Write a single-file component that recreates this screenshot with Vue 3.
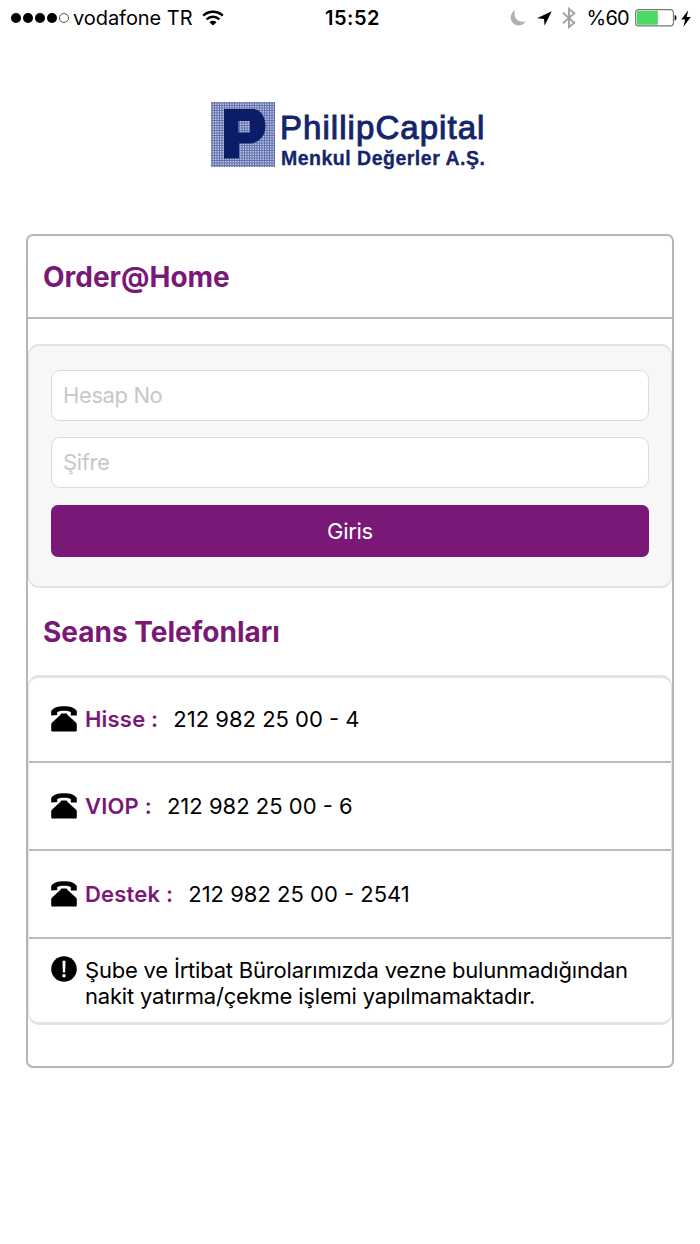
<template>
  <div class="page">
    <!-- Status bar -->
    <div class="status-bar">
      <div class="status-left">
        <span class="signal">
          <i v-for="n in 5" :key="n" class="dot" :class="{ empty: n === 5 }"></i>
        </span>
        <span class="carrier">vodafone TR</span>
        <svg class="wifi" width="22" height="16" viewBox="0 0 22 16" fill="none" stroke="#000" stroke-width="2.4">
          <path d="M1.2 5.6C6.8.4 15.2.4 20.8 5.6" />
          <path d="M4.6 9.3c3.7-3.4 9.1-3.4 12.8 0" />
          <path d="M11 15.6 7.5 12.2c2-1.9 5-1.9 7 0z" fill="#000" stroke="none" />
        </svg>
      </div>
      <div class="clock">15:52</div>
      <div class="status-right">
        <svg class="moon" width="16" height="16" viewBox="0 0 16 16">
          <path d="M5 .3A8 8 0 1 0 15.700 11.200C9 13.500 2.500 7.500 5 .3z" fill="#b0b0b0" />
        </svg>
        <svg class="arrow" width="15" height="15" viewBox="0 0 15 15">
          <path d="M14.7.3 0 7.2l7 .8.6 6.8z" fill="#000" />
        </svg>
        <svg class="bluetooth" width="14" height="22" viewBox="0 0 14 22" fill="none" stroke="#a3a3a3" stroke-width="1.9">
          <path d="M1 5.8 12.3 15.800 7 20.200V1.8L12.300 6.200 1 16.200" />
        </svg>
        <span class="percent">%60</span>
        <svg class="battery" width="42" height="18" viewBox="0 0 42 18">
          <rect x=".6" y=".6" width="37.8" height="16.3" rx="3" fill="#fff" stroke="#777" stroke-width="1.1" />
          <path d="M3.5 1.7H22.8V15.8H3.5A1.8 1.8 0 0 1 1.7 14V3.5A1.8 1.8 0 0 1 3.5 1.7z" fill="#4cd964" />
          <path d="M39.6 6c2.6.5 2.6 5.2 0 5.7z" fill="#000" />
        </svg>
        <svg class="bolt" width="10" height="17" viewBox="0 0 10 17">
          <path d="M7.2.3.3 9.6h3.9L2.4 16.7 9.8 6.9H5.7z" fill="#000" />
        </svg>
      </div>
    </div>

    <!-- Logo -->
    <div class="logo">
      <svg class="logo-mark" width="64" height="65" viewBox="0 0 64 65">
        <rect width="64" height="65" fill="#bcc4e0" />
        <path :d="gridPath" stroke="#5b6bac" stroke-width=".9" fill="none" />
        <path
          d="M13 7H43C50 8 54.5 15 54.5 24S49 40 40 41.5H28V56.5H13z M27.5 19V30.5H39V19z"
          fill="#0c1d68"
          fill-rule="evenodd"
        />
      </svg>
      <div class="logo-text">
        <div class="logo-name">PhillipCapital</div>
        <div class="logo-sub">Menkul Değerler A.Ş.</div>
      </div>
    </div>

    <div class="card">
      <h1 class="card-title">Order@Home</h1>

      <!-- Login form -->
      <form class="login" @submit.prevent>
        <input v-model="account" class="field" type="text" placeholder="Hesap No" />
        <input v-model="password" class="field" type="password" placeholder="Şifre" />
        <button class="submit" type="submit">Giris</button>
      </form>

      <h2 class="section-title">Seans Telefonları</h2>

      <!-- Phone list -->
      <div class="phones">
        <div v-for="phone in phones" :key="phone.label" class="phone-row">
          <svg class="row-icon" width="26" height="26" viewBox="0 0 26 26">
            <path d="M.2 9.400V5C2.500 1.500 7 .3 13 .3s10.500 1.200 12.800 4.700v4.400h-6V5.900C16 4.400 10 4.400 6.200 5.900v3z" />
            <path d="M8.800 9.600C9.300 9.200 9.600 7.400 10.800 7.400h4.400c1.200 0 1.500 1.800 2 2.200l7.700 7c.7.700.9 1.300.9 2.100v5.500c0 .8-.6 1.400-1.400 1.400H1.600C.8 25.600.2 25 .2 24.200v-5.500c0-.8.2-1.400.9-2.100z" />
          </svg>
          <span class="phone-label">{{ phone.label }} :</span>
          <span class="phone-number">{{ phone.number }}</span>
        </div>
        <div class="notice">
          <svg class="row-icon" width="26" height="26" viewBox="0 0 26 26">
            <circle cx="13" cy="13" r="12.8" />
            <path d="M11.5 4.800h3l-.4 11.700h-2.200z" fill="#fff" />
            <circle cx="13" cy="19.800" r="1.700" fill="#fff" />
          </svg>
          <p class="notice-text">
            Şube ve İrtibat Bürolarımızda vezne bulunmadığından<br />nakit yatırma/çekme işlemi yapılmamaktadır.
          </p>
        </div>
      </div>
    </div>
  </div>
</template>

<script setup>
import { ref } from 'vue'

const account = ref('')
const password = ref('')

const phones = [
  { label: 'Hisse', number: '212 982 25 00 - 4' },
  { label: 'VIOP', number: '212 982 25 00 - 6' },
  { label: 'Destek', number: '212 982 25 00 - 2541' }
]

// fine mesh behind the P of the logo
const gridPath = Array.from({ length: 26 }, (_, i) => {
  const p = 1 + i * 2.5
  return `M${p} 0V65M0 ${p}H64`
}).join('')
</script>

<style>
body {
  margin: 0;
  background: #fff;
}
</style>

<style scoped>
.page {
  box-sizing: border-box;
  width: 700px;
  height: 1244px;
  overflow: hidden;
  background: #fff;
  color: #000;
  font-family: Inter, "Liberation Sans", sans-serif;
}

.status-bar {
  display: grid;
  grid-template-columns: 1fr auto 1fr;
  align-items: center;
  height: 36px;
  padding: 0 9px 0 11px;
  font-size: 20px;
}

.status-left,
.status-right {
  display: flex;
  align-items: center;
}

.status-right {
  justify-content: flex-end;
}

.signal {
  display: flex;
  gap: 2px;
}

.dot {
  box-sizing: border-box;
  width: 10px;
  height: 10px;
  border-radius: 50%;
  background: #000;
}

.dot.empty {
  border: 1px solid #555;
  background: #fff;
}

.carrier {
  margin-left: 4px;
  letter-spacing: -0.05px;
}

.wifi {
  margin-left: 10px;
}

.clock {
  padding-left: 3px;
  font-weight: 600;
  letter-spacing: 0.5px;
}

.arrow {
  margin-left: 10px;
}

.bluetooth {
  margin-left: 10px;
}

.percent {
  margin-left: 10px;
  letter-spacing: -0.7px;
}

.battery {
  margin-left: 6px;
}

.bolt {
  margin-left: 4px;
}

.moon {
  margin-right: 1px;
}

.logo {
  display: flex;
  height: 132px;
  padding: 66px 0 0 211px;
  color: #15256b;
  font-family: "Liberation Sans", Arial, sans-serif;
}

.logo-text {
  margin-left: 5px;
  white-space: nowrap;
}

.logo-name {
  margin-top: 7px;
  font-size: 33px;
  letter-spacing: 1.05px;
  line-height: 38px;
  -webkit-text-stroke: 1px #15256b;
}

.logo-sub {
  margin-left: 1px;
  font-size: 19.5px;
  font-weight: 700;
  letter-spacing: 0.5px;
  line-height: 22px;
  -webkit-text-stroke: 0.3px #15256b;
}

.card {
  box-sizing: border-box;
  width: 648px;
  height: 834px;
  margin: 0 auto;
  border: 2px solid #b6b6b6;
  border-radius: 7px;
}

.card-title,
.section-title {
  margin: 0;
  padding-left: 15px;
  color: #7a1878;
  font-size: 28px;
  font-weight: 700;
}

.card-title {
  height: 81px;
  border-bottom: 2px solid #b9b9b9;
  line-height: 82px;
}

.login {
  display: flex;
  flex-direction: column;
  box-sizing: border-box;
  height: 244px;
  margin-top: 25px;
  padding: 24px 22px 0;
  border: 2px solid #e2e2e2;
  border-right-width: 1px;
  border-left-width: 1px;
  border-radius: 11px;
  background: #f7f7f7;
}

.field {
  box-sizing: border-box;
  width: 100%;
  height: 51px;
  margin: 0 0 16px;
  padding: 0 11px 1px;
  border: 1px solid #dcdcdc;
  border-radius: 9px;
  outline: none;
  background: #fff;
  font-family: inherit;
  font-size: 22px;
  letter-spacing: -0.4px;
}

.field + .field {
  margin-bottom: 17px;
}

.field::placeholder {
  color: #c7c7cc;
  opacity: 1;
}

.submit {
  height: 52px;
  padding: 0;
  border: none;
  border-radius: 7px;
  background: #7a1878;
  color: #fff;
  font-family: inherit;
  font-size: 22px;
  letter-spacing: -0.3px;
}

.section-title {
  height: 87px;
  line-height: 88px;
}

.phones {
  box-sizing: border-box;
  height: 350px;
  border: 3px solid #e3e3e3;
  border-right-width: 1px;
  border-left-width: 1px;
  border-radius: 11px;
}

.phone-row {
  display: flex;
  align-items: center;
  box-sizing: border-box;
  height: 88px;
  padding-left: 21.5px;
  border-bottom: 2px solid #bcbcbc;
  font-size: 22px;
}

.phone-row:first-child {
  height: 85px;
  padding-bottom: 2px;
}

.row-icon {
  flex-shrink: 0;
  fill: #000;
}

.phone-label {
  margin-left: 8.5px;
  color: #7a1878;
  font-weight: 600;
  letter-spacing: 0.2px;
}

.phone-number {
  margin-left: 15px;
}

.notice {
  display: flex;
  padding: 17px 0 0 21.5px;
}

.notice-text {
  margin: 1px 0 0 8.5px;
  font-size: 22px;
  letter-spacing: -0.2px;
  line-height: 26px;
  white-space: nowrap;
}
</style>
